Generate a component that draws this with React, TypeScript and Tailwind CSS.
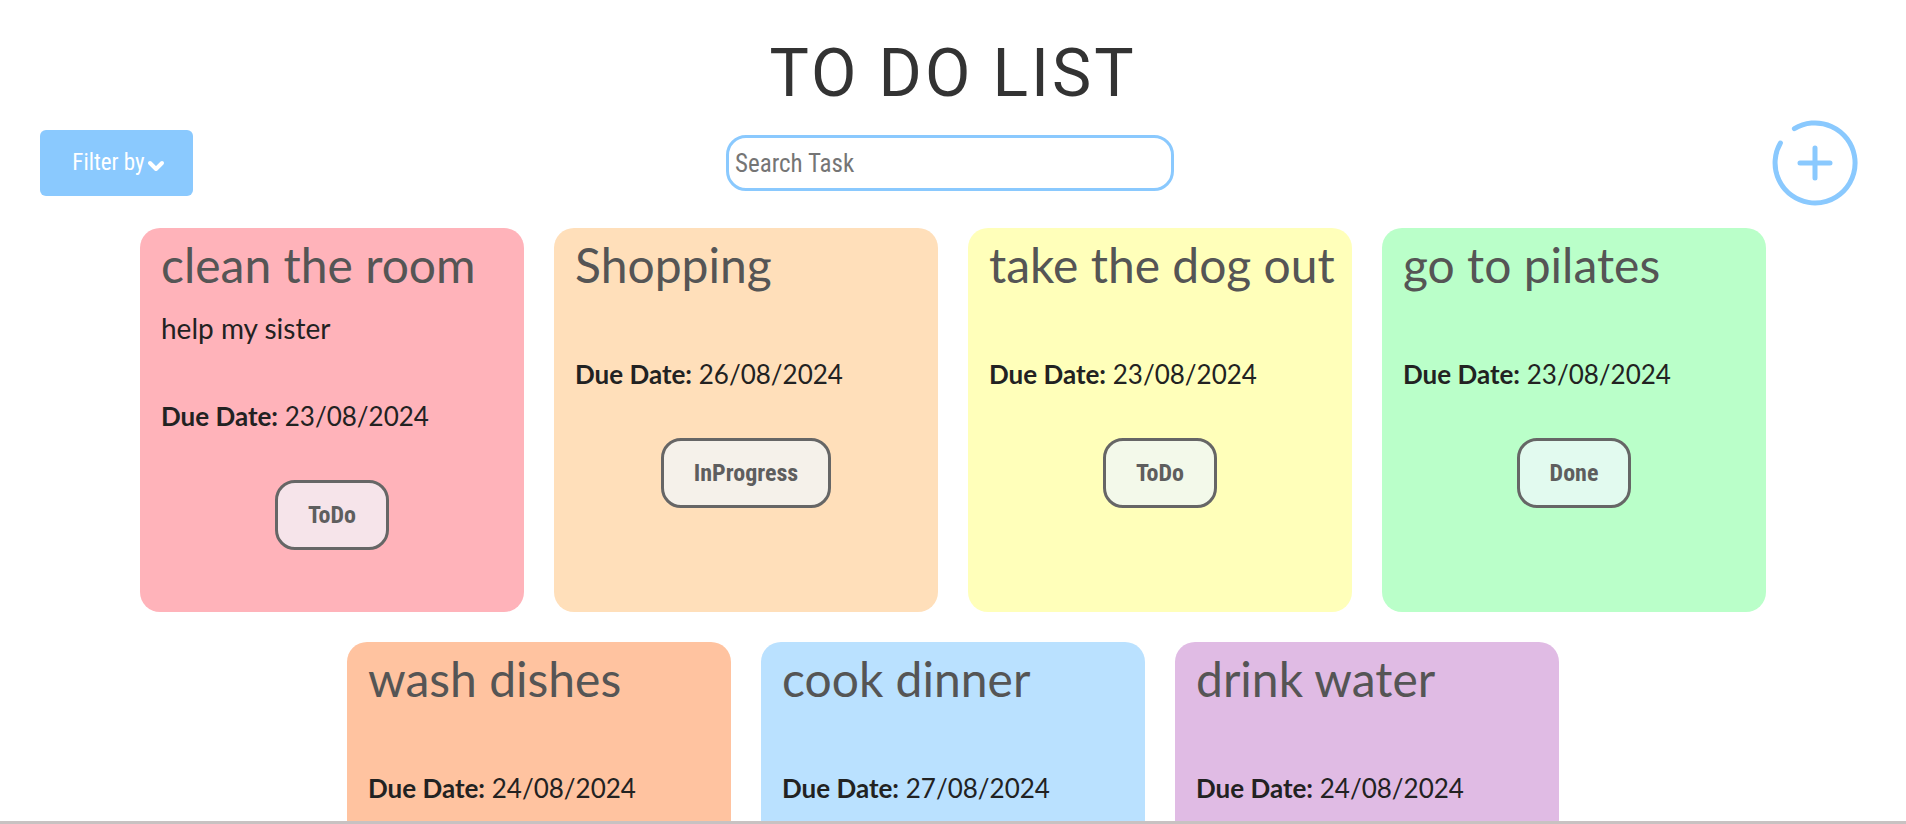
import React from 'react';

type Task = {
  title: string;
  desc?: string;
  due: string;
  status?: string;
  bg: string;
  btn: string;
};

const tasks: Task[] = [
  { title: 'clean the room', desc: 'help my sister', due: '23/08/2024', status: 'ToDo', bg: 'bg-[#ffb3ba]', btn: 'bg-[#f6e4ea]' },
  { title: 'Shopping', due: '26/08/2024', status: 'InProgress', bg: 'bg-[#ffdfba]', btn: 'bg-[#f5f1ea]' },
  { title: 'take the dog out', due: '23/08/2024', status: 'ToDo', bg: 'bg-[#ffffba]', btn: 'bg-[#f3f9ea]' },
  { title: 'go to pilates', due: '23/08/2024', status: 'Done', bg: 'bg-[#baffc9]', btn: 'bg-[#e2faef]' },
  { title: 'wash dishes', due: '24/08/2024', status: 'ToDo', bg: 'bg-[#ffc3a0]', btn: 'bg-[#f6e9e4]' },
  { title: 'cook dinner', due: '27/08/2024', status: 'ToDo', bg: 'bg-[#bae1ff]', btn: 'bg-[#e6f2fb]' },
  { title: 'drink water', due: '24/08/2024', status: 'ToDo', bg: 'bg-[#e0bbe4]', btn: 'bg-[#f2e6f3]' },
];

const condensed = "font-['Roboto_Condensed','Liberation_Sans_Narrow','Arial_Narrow',Roboto,sans-serif] [font-stretch:condensed]";

function PlusCircle() {
  return (
    <svg width="90" height="90" viewBox="0 0 90 90" fill="none" stroke="#8ac9fe" strokeWidth="5" strokeLinecap="round">
      <path d="M24.4 10.7 A40 40 0 1 1 10.4 25" />
      <path d="M45 30 V60 M30 45 H60" />
    </svg>
  );
}

function TaskCard({ task }: { task: Task }) {
  return (
    <div className={`w-[384px] h-[384px] shrink-0 rounded-[20px] ${task.bg} px-[21px] pt-[9px] flex flex-col items-start font-['Lato',sans-serif]`}>
      <h2 className="text-[48px] leading-[56px] text-[#555] whitespace-nowrap">{task.title}</h2>
      {task.desc && <p className="mt-[19px] text-[28px] leading-[32px] text-[#222]">{task.desc}</p>}
      <p className={`${task.desc ? 'mt-[56px]' : 'mt-[65px]'} text-[26px] leading-[32px] text-[#222]`}>
        <span className="font-bold">Due Date:</span> {task.due}
      </p>
      {task.status && (
        <button className={`self-center mt-[48px] h-[70px] px-[30px] border-[3px] border-[#666] rounded-[20px] ${task.btn} ${condensed} font-bold text-[24px] text-[#5e5e5e]`}>
          {task.status}
        </button>
      )}
    </div>
  );
}

export default function App() {
  return (
    <div className="min-h-screen bg-white overflow-hidden h-[824px]">
      <h1 className="pt-[41px] text-center text-[66px] leading-[66px] tracking-[0.045em] text-[#333] font-['Roboto',sans-serif]">TO DO LIST</h1>
      <div className="mt-[11px] grid grid-cols-[1fr_auto_1fr] items-center pl-[40px] pr-[46px]">
        <div className="justify-self-start">
          <button className={`h-[66px] w-[153px] rounded-[6px] bg-[#8ac9fe] text-white flex items-center justify-center pl-[4px] ${condensed} text-[23px]`}>
            Filter by
            <svg width="18" height="12" viewBox="0 0 18 12" className="mt-[6px] ml-[2px]" fill="none" stroke="white" strokeWidth="4" strokeLinecap="round" strokeLinejoin="round">
              <path d="M3 3 L9 9 L15 3" />
            </svg>
          </button>
        </div>
        <input
          placeholder="Search Task"
          className={`w-[448px] h-[56px] rounded-[20px] border-[3px] border-[#8ac9fe] px-[6px] outline-none text-[25px] placeholder:text-[#757575] ${condensed}`}
        />
        <div className="justify-self-end">
          <PlusCircle />
        </div>
      </div>
      <div className="mt-[20px] flex flex-wrap justify-center gap-[30px]">
        {tasks.map((t) => (
          <TaskCard key={t.title} task={t} />
        ))}
      </div>
      <div className="fixed bottom-0 left-0 right-0 h-[3px] bg-[#c8c2c2]" />
    </div>
  );
}
